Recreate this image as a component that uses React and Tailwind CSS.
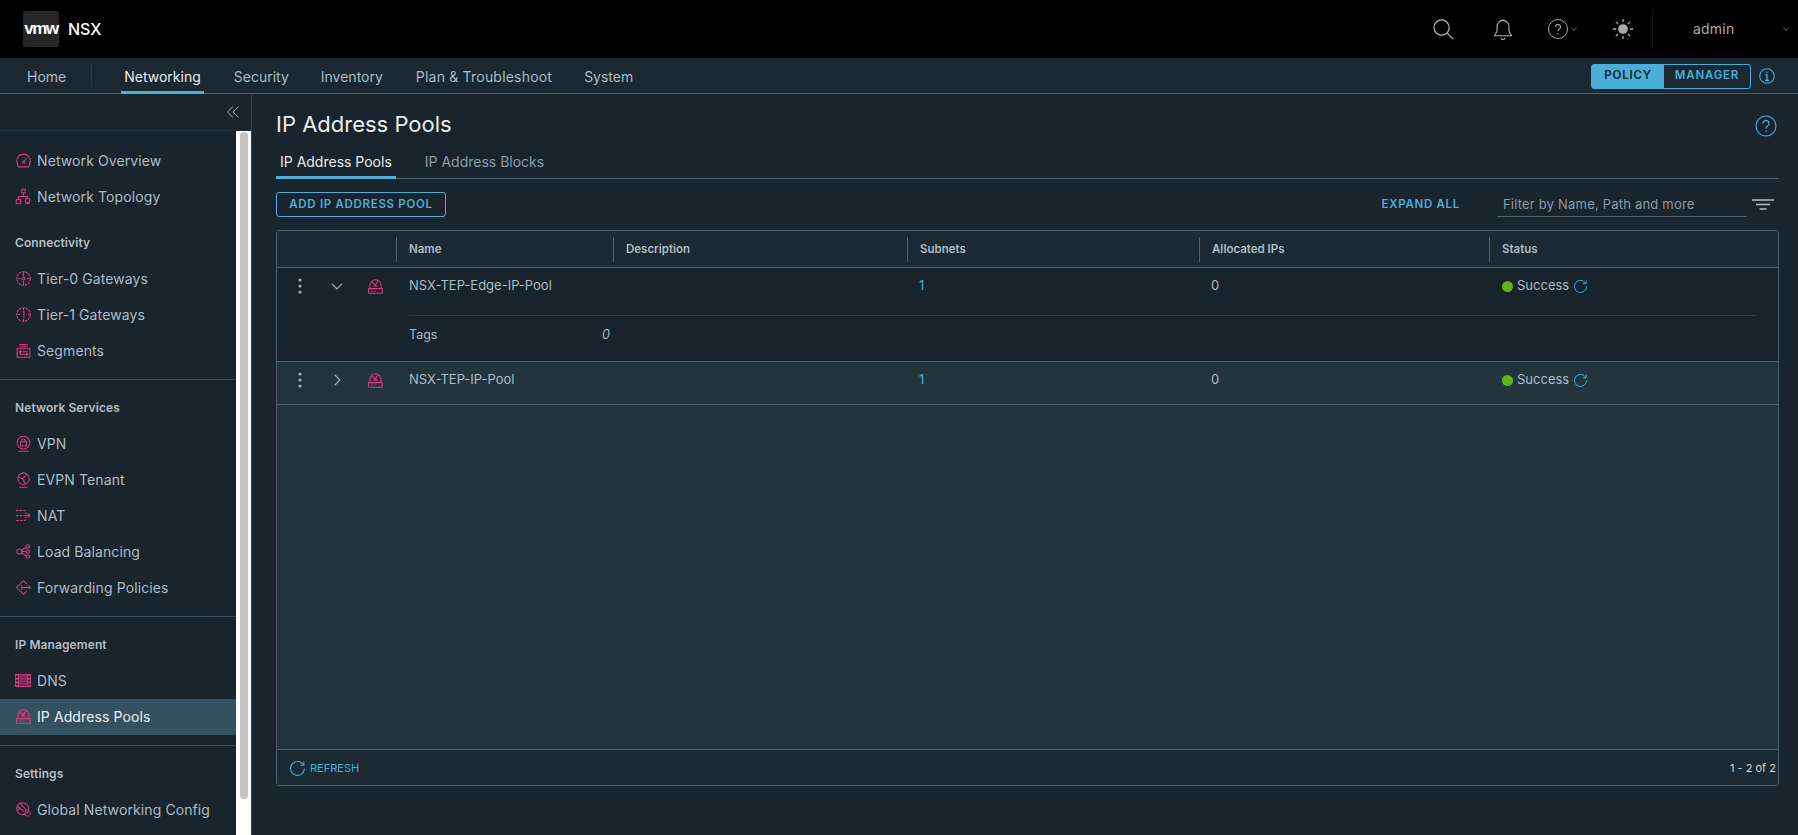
import React from 'react';

const font = { fontFamily: 'Inter, "Noto Sans", sans-serif' };

const Pink = ({ children, className = 'w-[17px] h-[17px]' }) => (
  <svg viewBox="0 0 20 20" fill="none" stroke="#e03b80" strokeWidth="1.200" className={className}>{children}</svg>
);

// pool icon: dome on top of a small box
const PoolIcon = ({ className }) => (
  <Pink className={className}>
    <path d="M3.500 12V8.500a6.500 6.500 0 0 1 13 0V12" />
    <path d="M5.500 4.500l4.500 4 3-6.300M7.500 9.500h5" />
    <path d="M2 12.500h16V18H2z" />
    <path d="M4.500 15.300h2M8.500 15.300h1.500" />
  </Pink>
);

const icons = {
  overview: (
    <Pink>
      <path d="M5 17.500h10a2 2 0 0 0 2-2l1-5a8 8 0 1 0-16 0l1 5a2 2 0 0 0 2 2z" />
      <path d="M10 12l3.500-4.500" />
      <circle cx="10" cy="12" r="1" />
    </Pink>
  ),
  topology: (
    <Pink>
      <path d="M8 1.500h4v4H8zM1.500 13.500h5v5h-5zM12 14.500a2.800 2.800 0 1 0 5.600 0a2.800 2.800 0 1 0 -5.600 0M10 5.500v4.500M4 13.500V10h10.800v1.700" />
      <path d="M12 18.500h5.600" />
    </Pink>
  ),
  tier0: (
    <Pink>
      <circle cx="10" cy="10" r="8" strokeDasharray="3 1" />
      <circle cx="10" cy="10" r="1.700" />
      <path d="M10 2v5M10 13v5M3 10h3M14 10h3" />
    </Pink>
  ),
  tier1: (
    <Pink>
      <circle cx="10" cy="10" r="8" strokeDasharray="3 1" />
      <path d="M9 7.500l1.500-1v7.500M3 10h3M15 10h2M10 2v3M10 15v3" />
    </Pink>
  ),
  segments: (
    <Pink>
      <path d="M2.500 8h15v10h-15zM5 5.500h10M5 3h10" />
      <path d="M5 11.500h10M5 14.500h10M7 10l-2 1.500 2 1.500M13 13l2 1.500-2 1.500" />
    </Pink>
  ),
  vpn: (
    <Pink>
      <circle cx="10" cy="9" r="7.500" />
      <path d="M6.500 8h7v5h-7zM8 8V6.500a2 2 0 0 1 4 0V8M4 19h12" />
    </Pink>
  ),
  evpn: (
    <Pink>
      <circle cx="10" cy="9" r="6.800" />
      <path d="M4 7l5 2 5-5M9 9l3 6M5 19h10" />
    </Pink>
  ),
  nat: (
    <Pink>
      <path d="M1 4h10a2 2 0 0 1 2 2v8a2 2 0 0 1-2 2H1M1 10h17M15 7.500l3 2.500-3 2.500" strokeDasharray="3 1.300" />
    </Pink>
  ),
  lb: (
    <Pink>
      <circle cx="5" cy="10" r="3" />
      <circle cx="15" cy="4" r="2" />
      <circle cx="15" cy="10" r="2" />
      <circle cx="15" cy="16" r="2" />
      <path d="M7.500 8.500L13 5M8 10h5M7.500 11.500L13 15" />
    </Pink>
  ),
  forwarding: (
    <Pink>
      <path d="M14 6l-4-4-8 8 8 8 4-4" />
      <path d="M8 7v6M8 10h10M16 8l2 2-2 2" />
    </Pink>
  ),
  dns: (
    <svg viewBox="0 0 20 16" className="w-[16px] h-[13px]">
      <rect x="0" y="0" width="20" height="16" fill="#e03b80" />
      <rect x="5" y="1" width="10" height="14" fill="#7b2b5d" />
      <path d="M1 2h3v2.500H1zM1 6.700h3v2.500H1zM1 11.500h3V14H1zM16 2h3v2.500h-3zM16 6.700h3v2.500h-3zM16 11.500h3V14h-3z" fill="#1a242d" />
    </svg>
  ),
  pool: <PoolIcon className="w-[17px] h-[17px]" />,
  config: (
    <Pink>
      <circle cx="9" cy="9" r="7" />
      <path d="M3 6.500l8 6M6 2.500l8 9M2.500 11l4-3" />
      <circle cx="14.500" cy="14.500" r="3.300" strokeDasharray="2 1" />
    </Pink>
  ),
};

const sections = [
  { items: [['Network Overview', 'overview'], ['Network Topology', 'topology']], plain: true },
  { label: 'Connectivity', items: [['Tier-0 Gateways', 'tier0'], ['Tier-1 Gateways', 'tier1'], ['Segments', 'segments']] },
  { label: 'Network Services', items: [['VPN', 'vpn'], ['EVPN Tenant', 'evpn'], ['NAT', 'nat'], ['Load Balancing', 'lb'], ['Forwarding Policies', 'forwarding']] },
  { label: 'IP Management', items: [['DNS', 'dns'], ['IP Address Pools', 'pool', true]] },
  { label: 'Settings', items: [['Global Networking Config', 'config']], last: true },
];

const Refresh = ({ className }) => (
  <svg viewBox="0 0 16 16" fill="none" stroke="#49afd9" strokeWidth="1" className={className}>
    <path d="M13.500 4.500A6.500 6.500 0 1 0 14.500 8" />
    <path d="M14 1.500v3.500h-3.500" />
  </svg>
);

const Chevron = ({ className, stroke = '#a6aeb4', d = 'M2 4l4 4 4-4' }) => (
  <svg viewBox="0 0 12 12" fill="none" stroke={stroke} strokeWidth="1" className={className}><path d={d} /></svg>
);

const Header = () => (
  <header className="h-[58px] bg-black flex items-center shrink-0">
    <div className="ml-[23px] w-[36px] h-[36px] bg-[#262626] rounded-[2px] flex items-center justify-center text-white text-[17px] font-bold tracking-[-1.500px]" style={{ fontFamily: '"Liberation Sans", sans-serif' }}>vmw</div>
    <span className="ml-[9px] text-white text-[16px] font-medium">NSX</span>
    <div className="ml-auto flex items-center text-[#a9a9a9]">
      <svg viewBox="0 0 22 22" fill="none" stroke="#b3b3b3" strokeWidth="1.300" className="w-[21px] h-[21px]">
        <circle cx="9" cy="9" r="8" />
        <path d="M15 15l6 6" />
      </svg>
      <svg viewBox="0 0 22 24" fill="none" stroke="#b3b3b3" strokeWidth="1.200" className="ml-[39px] w-[20px] h-[22px]">
        <path d="M1.500 19.500c0-1.500 3-3 3-6V9a6.500 6.500 0 0 1 13 0v4.500c0 3 3 4.500 3 6zM11 1v1.500M9 21.500a2 2 0 0 0 4 0" />
      </svg>
      <svg viewBox="0 0 20 20" fill="none" stroke="#a9a9a9" strokeWidth="1" className="ml-[35px] w-[20px] h-[20px]">
        <circle cx="10" cy="10" r="9.500" />
        <path d="M7.500 8a2.500 2.500 0 1 1 3.800 2.100c-.9.600-1.300 1-1.300 2.200M10 14.200v1" strokeWidth="1.200" />
      </svg>
      <Chevron className="ml-[2px] w-[8px] h-[8px]" />
      <svg viewBox="0 0 24 24" className="ml-[34px] w-[22px] h-[22px]" fill="#a9a9a9" stroke="#a9a9a9" strokeWidth="1.400">
        <circle cx="12" cy="12" r="5.300" stroke="none" />
        <path d="M12 1v3.500M12 19.500V23M1 12h3.500M19.500 12H23M4.200 4.200l2.500 2.500M17.300 17.300l2.500 2.500M4.200 19.800l2.500-2.500M17.300 6.700l2.500-2.500" />
      </svg>
      <div className="ml-[18px] h-[40px] border-l border-[#141414]" />
      <span className="ml-[40px] w-[41px] text-[14px] tracking-[0.2px] mb-[2px]">admin</span>
      <Chevron className="ml-[48px] mr-[8px] w-[8px] h-[8px]" />
    </div>
  </header>
);

const NavBar = () => (
  <nav className="h-[36px] bg-[#1b2731] border-b border-[#4e5f6a] flex items-stretch text-[14px] text-[#adbbc4] shrink-0">
    <a className="ml-[27px] leading-[37px]">Home</a>
    <div className="ml-[25px] my-[6px] border-l border-[#2a3843]" />
    <a className="ml-[29px] px-[3px] leading-[37px] text-[#e9ecef] border-b-[3px] border-[#49afd9] h-[36px]">Networking</a>
    <a className="ml-[30px] leading-[37px]">Security</a>
    <a className="ml-[32px] leading-[37px]">Inventory</a>
    <a className="ml-[33px] leading-[37px] tracking-[0.2px]">Plan &amp; Troubleshoot</a>
    <a className="ml-[32px] leading-[37px]">System</a>
    <div className="ml-auto flex items-center mr-[23px]">
      <div className="flex h-[25px] rounded-[3px] border border-[#49afd9] text-[11.500px] font-semibold tracking-[0.8px] mt-[1px]">
        <span className="w-[72px] bg-[#49afd9] text-[#0f1f28] flex items-center justify-center">POLICY</span>
        <span className="w-[86px] text-[#49afd9] flex items-center justify-center">MANAGER</span>
      </div>
      <svg viewBox="0 0 16 16" fill="none" stroke="#49afd9" strokeWidth="1.100" className="ml-[8px] w-[16px] h-[16px]">
        <circle cx="8" cy="8" r="7.300" />
        <path d="M6 12.500h4M8 12.500V7H6.500M8 3.500v1.500" strokeWidth="1.300" />
      </svg>
    </div>
  </nav>
);

const sectionClass = (s) => {
  if (s.plain) return 'mb-[10px]';
  if (s.last) return '';
  return 'border-b border-[#414f59] pb-[10px] mb-[10px]';
};

const Sidebar = () => (
  <aside className="w-[252px] shrink-0 border-r border-[#33424c] flex flex-col text-[14px] tracking-[0.1px] min-h-0">
    <div className="h-[37px] shrink-0 border-b border-[#24323c] flex items-center justify-end pr-[11px]">
      <svg viewBox="0 0 14 14" fill="none" stroke="#a6aeb4" strokeWidth="1" className="w-[14px] h-[14px]">
        <path d="M7 1.500L1.500 7 7 12.500M12.500 1.500L7 7l5.500 5.500" />
      </svg>
    </div>
    <div className="flex flex-1 min-h-0 overflow-hidden">
      <div className="w-[236px] pt-[12px] shrink-0">
        {sections.map((s) => (
          <div key={s.items[0][0]} className={sectionClass(s)}>
            {s.label && <div className="h-[36px] pl-[15px] pb-px flex items-center text-[12px] font-semibold text-[#b3bdc4]">{s.label}</div>}
            {s.items.map(([name, icon, active]) => (
              <div key={name} className={`h-[36px] pb-px flex items-center ${active ? 'bg-[#34515f] text-[#eef1f3]' : 'text-[#adbbc4]'}`}>
                <span className="w-[37px] pl-[15px] flex items-center">{icons[icon]}</span>
                {name}
              </div>
            ))}
          </div>
        ))}
      </div>
      <div className="w-[15px] bg-white pl-[4px] pt-[1px]">
        <div className="w-[8px] h-[667px] bg-[#c4c4c4] rounded-[4px]" />
      </div>
    </div>
  </aside>
);

const cols = 'grid grid-cols-[119px_217px_294px_292px_290px_1fr]';

const PoolRow = ({ name, open }) => (
  <div className={`${cols} h-[36px] items-center text-[13px] text-[#adbbc4]`}>
    <div className="flex items-center">
      <svg viewBox="0 0 4 16" className="ml-[21px] w-[4px] h-[16px]" fill="#a6aeb4">
        <circle cx="2" cy="2" r="1.600" />
        <circle cx="2" cy="8" r="1.600" />
        <circle cx="2" cy="14" r="1.600" />
      </svg>
      <Chevron className="ml-[28px] w-[14px] h-[14px]" d={open ? 'M1.500 4l4.500 4.500L10.500 4' : 'M4 1.500L8.500 6 4 10.500'} />
      <PoolIcon className="ml-[23px] w-[17px] h-[17px]" />
    </div>
    <div className="pl-[13px]">{name}</div>
    <div />
    <div className="pl-[12px] text-[#49afd9]">1</div>
    <div className="pl-[12px]">0</div>
    <div className="pl-[13px] flex items-center">
      <span className="w-[11px] h-[11px] rounded-full bg-[#60b515]" />
      <span className="ml-[4px]">Success</span>
      <Refresh className="ml-[4px] w-[15px] h-[15px]" />
    </div>
  </div>
);

const headCell = 'border-l border-[#4e5f6a] h-[25px] pl-[12px] pt-[2px] flex items-center';

const Table = () => (
  <div className="mt-[13px] flex-1 min-h-0 flex flex-col rounded-[3px] border border-[#4e5f6a] bg-[#22343c]">
    <div className={`${cols} h-[37px] items-center shrink-0 bg-[#1c2a33] border-b border-[#4e5f6a] text-[11.500px] font-semibold text-[#adbbc4]`}>
      <div />
      <div className={headCell}>Name</div>
      <div className={headCell}>Description</div>
      <div className={headCell}>Subnets</div>
      <div className={headCell}>Allocated IPs</div>
      <div className={headCell}>Status</div>
    </div>
    <div className="bg-[#19232b] border-b border-[#4e5f6a] shrink-0 pb-[7px]">
      <PoolRow name="NSX-TEP-Edge-IP-Pool" open />
      <div className="ml-[132px] mr-[22px] mt-[11px] border-t border-[#2c3a44]" />
      <div className="ml-[132px] h-[38px] w-[201px] flex items-center justify-between text-[12.500px] text-[#adbbc4]">
        <span>Tags</span>
        <span className="italic">0</span>
      </div>
    </div>
    <div className="border-b border-[#4e5f6a] shrink-0 pb-[6px]">
      <PoolRow name="NSX-TEP-IP-Pool" />
    </div>
    <div className="flex-1" />
    <div className="h-[36px] shrink-0 bg-[#1c2a33] border-t border-[#4e5f6a] flex items-center pl-[12px] pr-[2px] pt-[2px]">
      <Refresh className="w-[17px] h-[17px]" />
      <span className="ml-[4px] text-[11px] text-[#49afd9]">REFRESH</span>
      <span className="ml-auto text-[11px] text-[#d6dbde]">1 - 2 of 2</span>
    </div>
  </div>
);

const Main = () => (
  <main className="flex-1 min-w-0 flex flex-col pl-[24px] pr-[19px] pt-[15px] pb-[49px]">
    <div className="flex items-center justify-between h-[30px] shrink-0">
      <h1 className="text-[22px] font-normal text-[#eaedf0]">IP Address Pools</h1>
      <svg viewBox="0 0 22 22" fill="none" stroke="#49afd9" strokeWidth="1.100" className="mr-[2px] mt-[4px] w-[22px] h-[22px]">
        <circle cx="11" cy="11" r="10" />
        <path d="M8 8.500a3 3 0 1 1 4.600 2.500c-1.100.7-1.600 1.200-1.600 2.500M11 15.500v1.500" strokeWidth="1.300" />
      </svg>
    </div>
    <div className="h-[40px] shrink-0 border-b border-[#4e5f6a] flex items-end text-[14px]">
      <a className="h-[37px] -mb-px px-[4px] pt-[3px] leading-[34px] text-[#e9ecef] border-b-[3px] border-[#49afd9]">IP Address Pools</a>
      <a className="ml-[29px] h-[37px] -mb-px pt-[3px] leading-[34px] text-[#8c9ba5]">IP Address Blocks</a>
    </div>
    <div className="mt-[13px] h-[25px] shrink-0 flex items-center">
      <button type="button" className="h-[25px] w-[170px] rounded-[3px] border border-[#49afd9] text-[#49afd9] text-[11.500px] font-semibold tracking-[0.7px]">ADD IP ADDRESS POOL</button>
      <span className="ml-auto text-[#49afd9] text-[11.500px] font-semibold tracking-[0.7px]">EXPAND ALL</span>
      <input placeholder="Filter by Name, Path and more" className="ml-[37px] w-[250px] h-[25px] pl-[6px] border-b border-[#4e5f6a] bg-transparent text-[13px] tracking-[0.2px] outline-none placeholder:text-[#8c9ba5]" />
      <svg viewBox="0 0 22 11" fill="none" stroke="#b3bdc4" strokeWidth="1.500" className="ml-[5px] mr-[5px] w-[22px] h-[11px]">
        <path d="M0 1h22M4 5.500h14M7.500 10h7" />
      </svg>
    </div>
    <Table />
  </main>
);

const App = () => (
  <div className="h-screen w-full flex flex-col overflow-hidden bg-[#1a242d]" style={font}>
    <Header />
    <NavBar />
    <div className="flex flex-1 min-h-0">
      <Sidebar />
      <Main />
    </div>
  </div>
);

export default App;
